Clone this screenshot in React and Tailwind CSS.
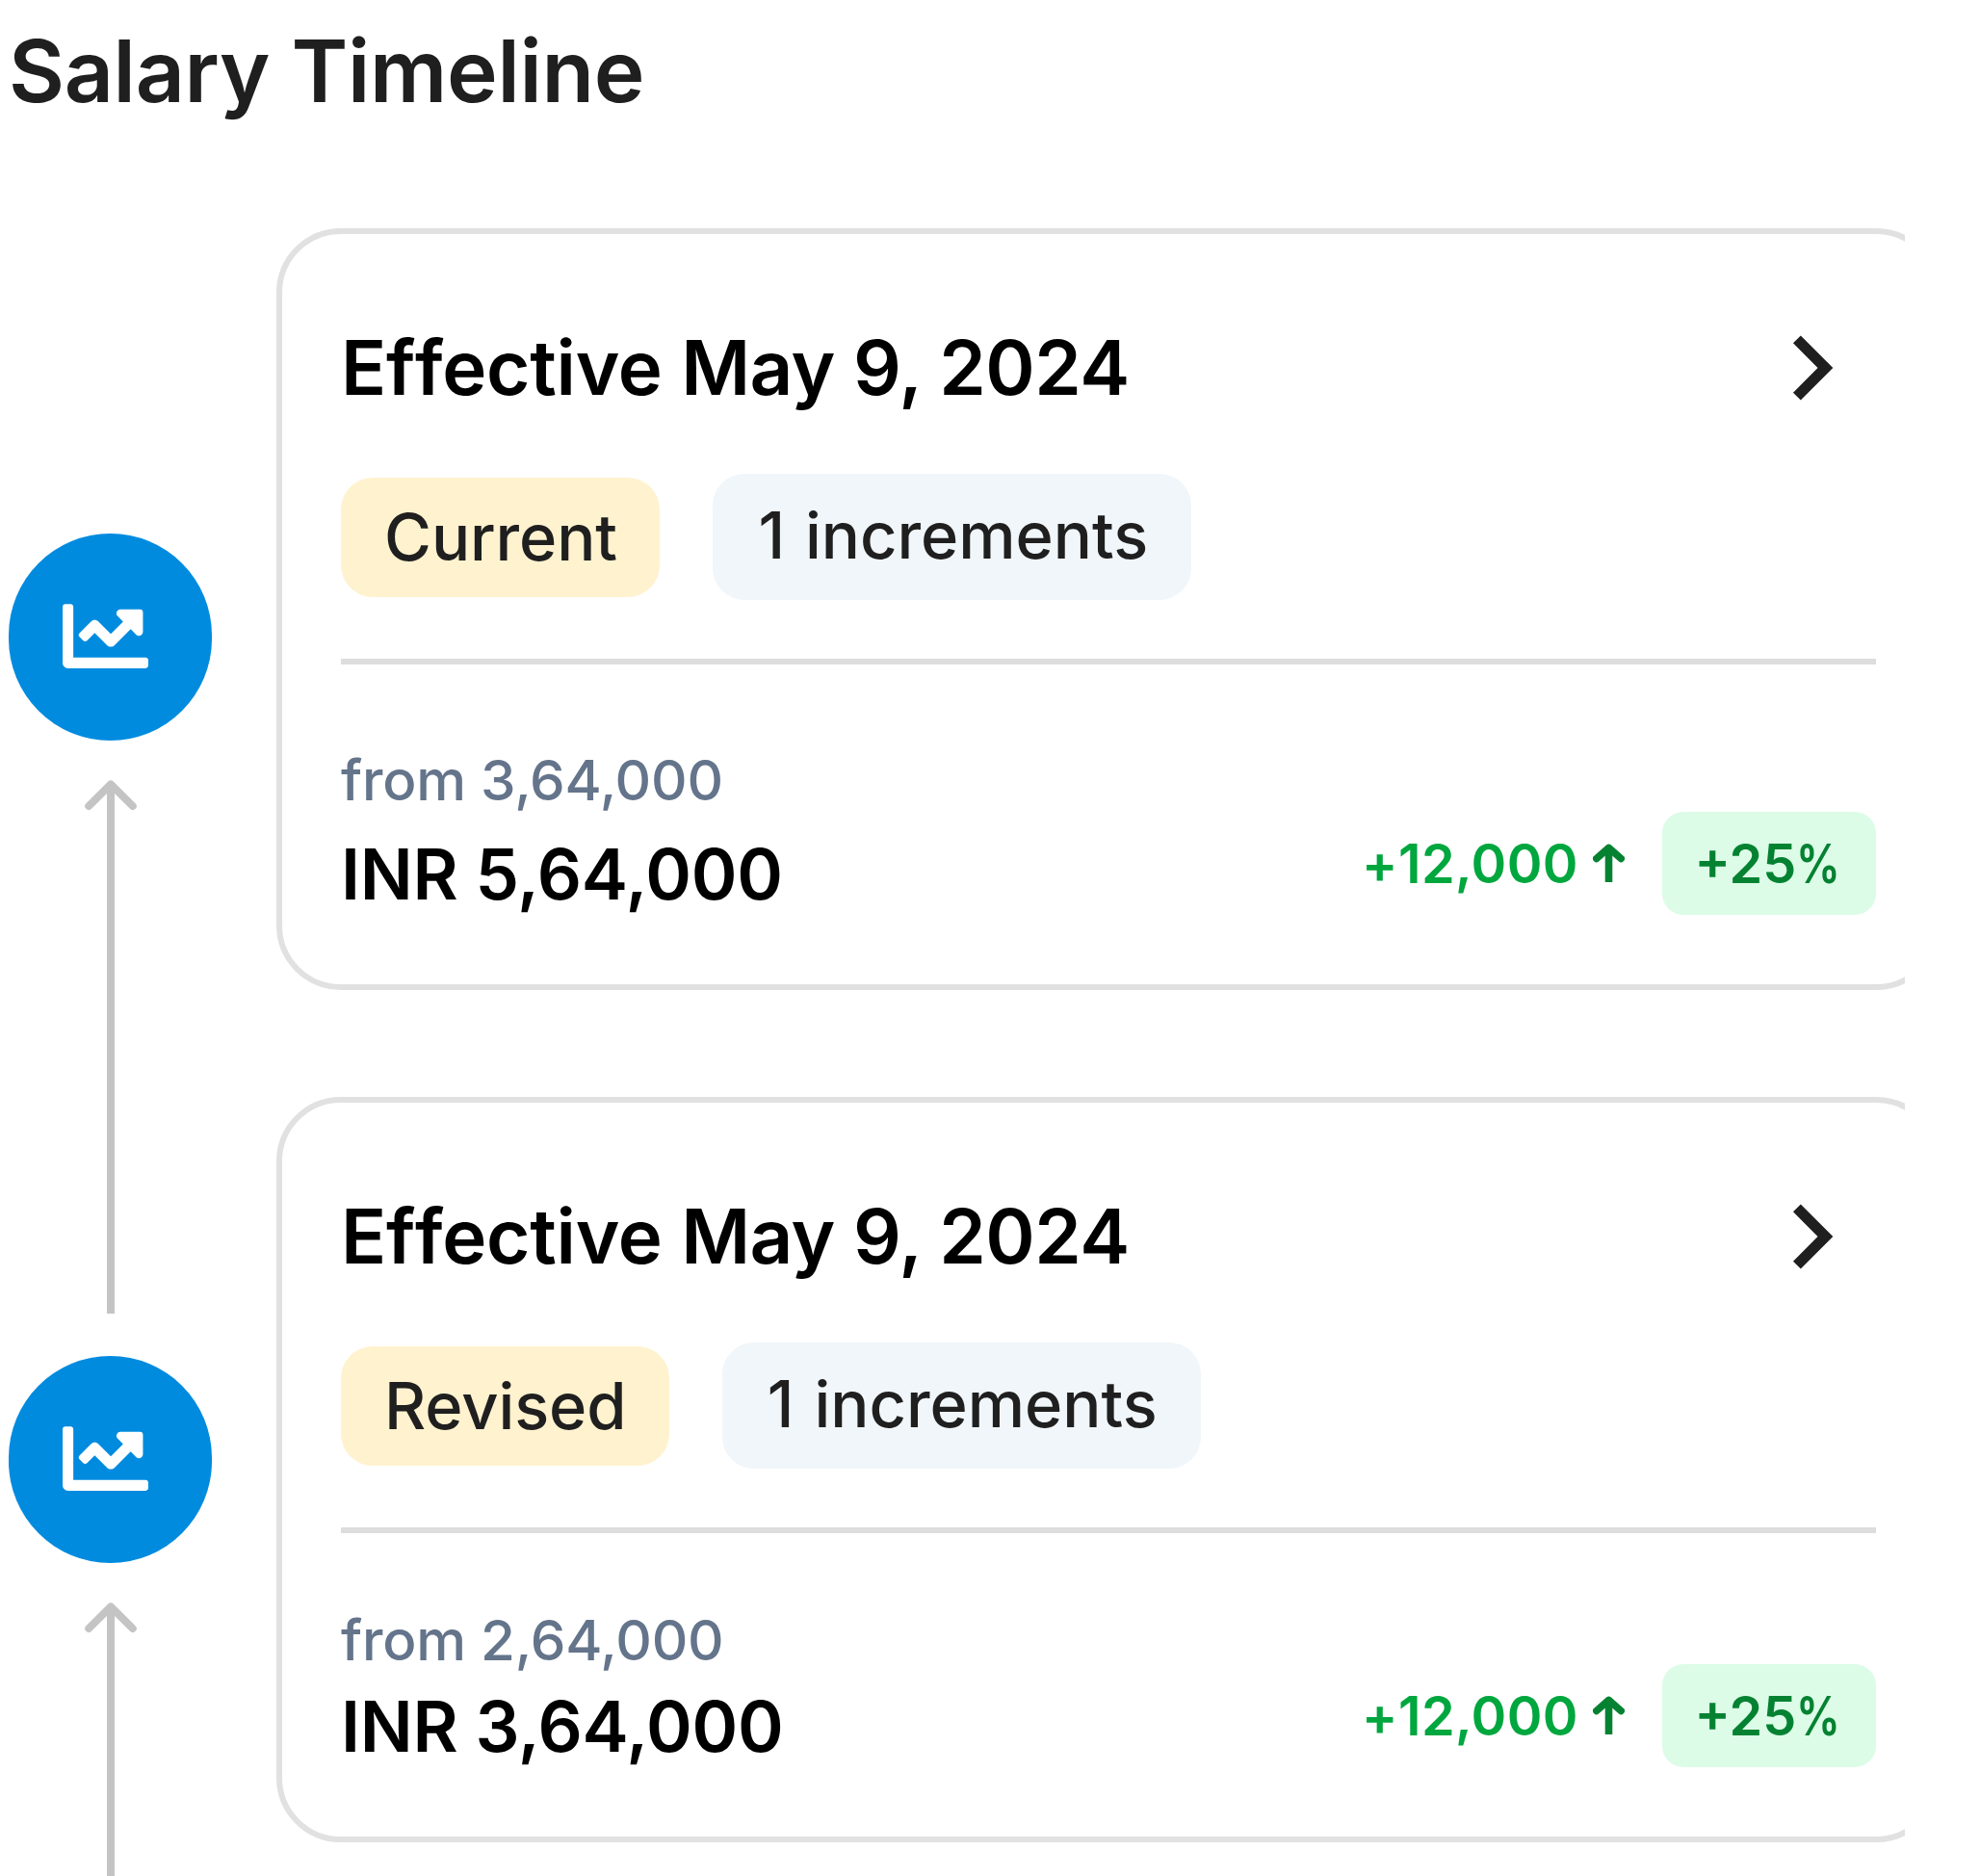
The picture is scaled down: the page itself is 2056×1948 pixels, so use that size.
import React from 'react';
import { FaChartLine } from 'react-icons/fa';
import { MdChevronRight } from 'react-icons/md';

const revisions = [
  { date: 'May 9, 2024', status: 'Current', increments: 1, from: '3,64,000', to: '5,64,000', diff: '+12,000', percent: 25 },
  { date: 'May 9, 2024', status: 'Revised', increments: 1, from: '2,64,000', to: '3,64,000', diff: '+12,000', percent: 25 },
];

// Arrow pointing up to the newer revision
const TimelineArrow = () => (
  <svg width="56" height="554" viewBox="0 0 56 554" fill="none" stroke="#c4c4c4" strokeWidth="8">
    <path d="M28 4v550" />
    <path d="M5.2 27 28 4.4 50.8 27" strokeLinecap="round" strokeLinejoin="round" />
  </svg>
);

const TimelineMarker = () => (
  <div className="flex flex-col">
    <div className="flex h-[215.4px] w-[211px] items-center rounded-full bg-[#008bdf] pl-14">
      <FaChartLine size={89} className="-mt-0.5 text-white" />
    </div>
    <div className="mt-[40.6px] h-[598.2px] pl-[78px]">
      <TimelineArrow />
    </div>
  </div>
);

const RevisionCard = ({ item, compact }) => (
  <div className={`flex w-[1728px] flex-col rounded-[67px] border-6 border-[#e1e1e1] px-[61px] ${compact ? 'h-[774px]' : 'h-[791px]'}`}>
    <div className="mt-[72px] flex h-[134px] items-center justify-between">
      <h2 className="text-[78px] font-semibold leading-none tracking-[-0.25px] text-black">
        <span className="[font-kerning:none]">Ef</span>fective <span className="tracking-[-0.5px]">{item.date}</span>
      </h2>
      <MdChevronRight size={134} className="text-[#1f1f1f]" />
    </div>
    <div className="mt-[43px] flex items-center gap-[55px] text-[66.8px] font-medium leading-none text-[#1f1f1f]">
      <span className="flex h-[124px] items-center rounded-[33px] bg-[#fff2cf] pl-[45px] pr-[44.5px] pt-0.5 tracking-[-0.1px]">{item.status}</span>
      <span className="flex h-[131px] items-center rounded-[33px] bg-[#f0f6f9] pb-0.5 pl-[47px] pr-[45px] [word-spacing:3px]">
        {item.increments} increments
      </span>
    </div>
    <div className="mt-[61px] h-1.5 shrink-0 bg-[#dddddd]" />
    <div className="flex items-end justify-between">
      <div>
        <p className={`text-[58.3px] font-medium leading-none tracking-[-0.2px] text-[#64748b] ${compact ? 'mt-[82px]' : 'mt-[91px]'}`}>from {item.from}</p>
        <p className={`text-[72.4px] font-semibold leading-none tracking-[-0.25px] text-black ${compact ? 'mt-[24px]' : 'mt-[32px]'}`}>INR {item.to}</p>
      </div>
      <div className="-mb-1.5 flex items-center text-[55.7px] font-semibold leading-none">
        <span className="tracking-[0.4px] text-[#00a63e]">{item.diff}</span>
        <svg className="ml-[15px]" width="33" height="40" viewBox="0 0 33 40" fill="none" stroke="#048232" strokeWidth="7.6">
          <path d="M16.5 5v35" />
          <path d="M3.8 15.5 16.5 4.4 29.2 15.5" strokeLinecap="round" strokeLinejoin="round" />
        </svg>
        <span className="ml-[38.5px] flex h-[107px] w-[222.5px] items-center rounded-[22px] bg-[#dcfce7] pl-[34px] text-[#048232]">
          +{item.percent}
          <span className="inline-block origin-left scale-x-[0.82]">%</span>
        </span>
      </div>
    </div>
  </div>
);

export default function App() {
  return (
    <div className="h-[1948px] w-[1978px] overflow-hidden bg-white font-['Inter',sans-serif]">
      <h1 className="pl-[9px] pt-[30px] text-[89.2px] font-semibold leading-none tracking-[-0.3px] text-[#1f1f1f]">Salary Timeline</h1>
      <div className="flex pl-[9px]">
        <div className="mt-[434.4px] w-[212px] shrink-0">
          {revisions.map((item) => (
            <TimelineMarker key={item.status} />
          ))}
        </div>
        <div className="ml-[66px] mt-[118px] flex shrink-0 flex-col gap-[111px]">
          {revisions.map((item, i) => (
            <RevisionCard key={item.status} item={item} compact={i > 0} />
          ))}
        </div>
      </div>
    </div>
  );
}
